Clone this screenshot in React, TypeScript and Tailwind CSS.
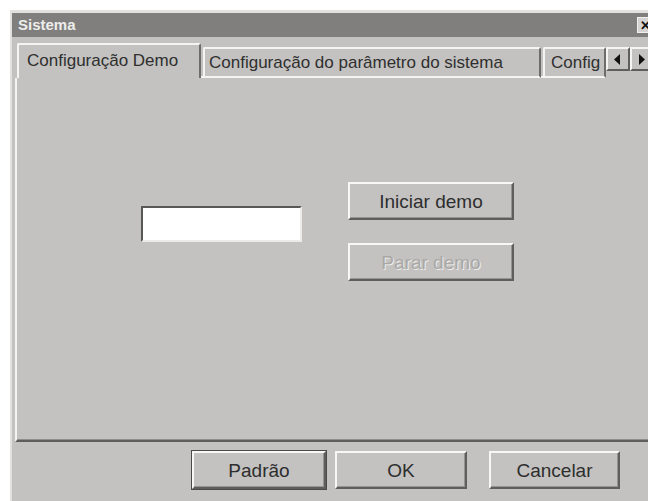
import clsx from 'clsx'

const raised =
  'border-2 border-t-[#f7f7f6] border-l-[#f7f7f6] border-b-[#5e5e5d] border-r-[#5e5e5d] shadow-[inset_-1px_-1px_0_#959493]'

function Button({
  label,
  width,
  disabled,
  isDefault,
  className,
}: {
  label: string
  width: string
  disabled?: boolean
  isDefault?: boolean
  className?: string
}) {
  return (
    <div
      className={clsx(
        'flex h-[38px] items-center justify-center bg-[#c3c2c0] text-[19px] leading-none',
        raised,
        width,
        isDefault && 'outline outline-1 outline-[#4a4a4a]',
        disabled ? 'text-[#a9a8a6] [text-shadow:1px_1px_0_#ededec]' : 'text-[#2e2e2e]',
        className,
      )}
    >
      {label}
    </div>
  )
}

function Tab({
  label,
  width,
  active,
  className,
}: {
  label: string
  width: string
  active?: boolean
  className?: string
}) {
  return (
    <div
      className={clsx(
        'flex shrink-0 items-center overflow-hidden whitespace-nowrap rounded-t-[2px] border-t-2 border-l-2 border-r-2 border-t-[#f4f4f3] border-l-[#f4f4f3] border-r-[#6d6c6b] bg-[#c3c2c0] text-[17px] text-[#2f2f2f]',
        width,
        active ? 'h-[35px] pb-[2px] pl-[8px]' : 'h-[31px] border-b-2 border-b-[#f4f4f3] pt-[1px]',
        className,
      )}
    >
      {label}
    </div>
  )
}

function ArrowButton({ dir }: { dir: 'left' | 'right' }) {
  return (
    <div className="flex h-[24px] w-[24px] shrink-0 items-center justify-center border-2 border-t-[#f4f4f3] border-l-[#f4f4f3] border-r-[#5e5e5d] border-b-[#5e5e5d] bg-[#c3c2c0]">
      <svg width="8" height="11" viewBox="0 0 8 11">
        {dir === 'left' ? (
          <path d="M6 0 L0 5.5 L6 11 Z" fill="#111" />
        ) : (
          <path d="M1 0 L7 5.5 L1 11 Z" fill="#111" />
        )}
      </svg>
    </div>
  )
}

export default function App() {
  return (
    <div
      className="h-[501px] w-[648px] overflow-hidden bg-white"
      style={{ fontFamily: '"Liberation Sans", Arial, sans-serif' }}
    >
      <div className="ml-[10px] mt-[10px] flex h-[491px] w-[660px] flex-col border-l-2 border-t-[3px] border-[#e2e1df] bg-[#c3c2c0]">
        {/* title bar */}
        <div className="flex h-[24px] shrink-0 items-center justify-between bg-[#807f7d] pl-[6px] pr-[17px]">
          <span className="text-[15px] font-bold text-[#ededec]">Sistema</span>
          <div className="flex h-[16px] w-[16px] items-center justify-center border border-[#f0f0f0] bg-[#d4d3d1] text-[13px] font-bold leading-none text-[#111]">
            ✕
          </div>
        </div>

        {/* tab strip */}
        <div className="flex h-[41px] shrink-0 items-end pl-[5px]">
          <Tab label="Configuração Demo" width="w-[184px]" active />
          <div className="w-[2px] shrink-0 self-end border-b-2 border-[#f4f4f3]" />
          <Tab label="Configuração do parâmetro do sistema" width="w-[338px]" className="pl-[4px]" />
          <div className="w-[2px] shrink-0 self-end border-b-2 border-[#f4f4f3]" />
          <Tab label="Config" width="w-[63px]" className="pl-[6px]" />
          <div className="mb-[7px] flex self-end">
            <ArrowButton dir="left" />
            <ArrowButton dir="right" />
          </div>
        </div>

        {/* tab page */}
        <div className="ml-[3px] h-[364px] shrink-0 border-l-2 border-b-2 border-l-[#f4f4f3] border-b-[#5e5e5d] shadow-[inset_0_-1px_0_#8f8e8c]">
          <div className="flex items-start pl-[124px] pt-[104px]">
            <div className="mt-[24px] h-[36px] w-[161px] border-2 border-t-[#585857] border-l-[#585857] border-b-[#ecebea] border-r-[#ecebea] bg-white" />
            <div className="ml-[46px] flex flex-col gap-[23px]">
              <Button label="Iniciar demo" width="w-[166px]" className="h-[37px]" />
              <Button label="Parar demo" width="w-[166px]" className="h-[37px]" disabled />
            </div>
          </div>
        </div>

        {/* dialog buttons */}
        <div className="flex pl-[180px] pt-[9px]">
          <Button label="Padrão" width="w-[134px]" isDefault />
          <Button label="OK" width="w-[132px]" className="ml-[9px]" />
          <Button label="Cancelar" width="w-[131px]" className="ml-[22px]" />
        </div>
      </div>
    </div>
  )
}
